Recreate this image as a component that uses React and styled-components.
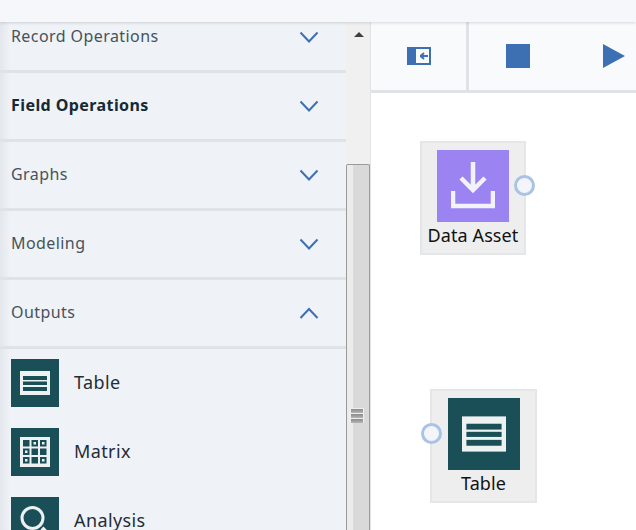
import React from "react";
import styled, { createGlobalStyle } from "styled-components";

const Global = createGlobalStyle`
  html, body { margin: 0; padding: 0; background: #fff; overflow: hidden; }
  body { font-family: "Noto Sans", "Liberation Sans", sans-serif; }
`;

const Chevron = ({ up }) => (
  <ChevronIcon width="20" height="12" viewBox="0 0 20 12">
    <path d={up ? "M1.5 11 L10 2 L18.5 11" : "M1.5 1.5 L10 10.5 L18.5 1.5"} fill="none" stroke="#3f6fb3" strokeWidth="2" />
  </ChevronIcon>
);

const TableGlyph = ({ w, h }) => (
  <svg width={w} height={h} viewBox="0 0 30 24">
    <rect width="30" height="24" fill="#eef1f1" />
    <rect x="3" y="5" width="24" height="4" fill="#1a4f58" />
    <rect x="3" y="10.5" width="24" height="3.5" fill="#1a4f58" />
    <rect x="3" y="16" width="24" height="4" fill="#1a4f58" />
  </svg>
);

const MatrixGlyph = () => {
  const hollow = [false, true, true, true, false, false, true, false, true];
  return (
    <svg width="30" height="30" viewBox="0 0 30 30">
      <rect width="30" height="30" fill="#eef1f1" />
      {hollow.map((h, c) => {
        const x = 3 + (c % 3) * 8.5;
        const y = 3 + Math.floor(c / 3) * 8.5;
        return (
          <g key={c}>
            <rect x={x} y={y} width="6.5" height="6.5" fill="#1a4f58" />
            {h && <rect x={x + 2} y={y + 2} width="2.5" height="2.5" fill="#eef1f1" />}
          </g>
        );
      })}
    </svg>
  );
};

const SearchGlyph = () => (
  <svg width="34" height="34" viewBox="0 0 34 34">
    <circle cx="14.5" cy="14" r="10.5" fill="none" stroke="#eef1f1" strokeWidth="3" />
    <path d="M24 24 L33 33" stroke="#eef1f1" strokeWidth="4" />
  </svg>
);

const sections = [
  { name: "Record Operations" },
  { name: "Field Operations", bold: true },
  { name: "Graphs" },
  { name: "Modeling" },
  { name: "Outputs", open: true },
];

const outputs = [
  { name: "Table", glyph: <TableGlyph w={30} h={24} /> },
  { name: "Matrix", glyph: <MatrixGlyph /> },
  { name: "Analysis", glyph: <SearchGlyph /> },
];

export default function App() {
  return (
    <>
      <Global />
      <Page>
        <TopBar />
        <Main>
          <Sidebar>
            <SidebarScroll>
              {sections.map((s) => (
                <Section key={s.name}>
                  <SectionTitle $bold={s.bold}>{s.name}</SectionTitle>
                  <Chevron up={s.open} />
                </Section>
              ))}
              <Items>
                {outputs.map((o) => (
                  <Item key={o.name}>
                    <ItemIcon>{o.glyph}</ItemIcon>
                    <ItemLabel>{o.name}</ItemLabel>
                  </Item>
                ))}
              </Items>
            </SidebarScroll>
          </Sidebar>
          <Scrollbar>
            <ArrowUp />
            <Thumb>
              <Grip>
                <GripBar />
                <GripBar />
                <GripBar />
              </Grip>
            </Thumb>
          </Scrollbar>
          <Workspace>
            <Toolbar>
              <ToolGroup $width={98} $pad={36}>
                <svg width="24" height="18" viewBox="0 0 24 18">
                  <rect width="24" height="18" fill="#3d70b2" />
                  <rect x="9" y="2" width="13" height="14" fill="#f9fafb" />
                  <path d="M13 9 H21 M13.5 9 L17 6 M13.5 9 L17 12" stroke="#3d70b2" strokeWidth="2" fill="none" />
                </svg>
              </ToolGroup>
              <ToolGroup $grow $pad={37}>
                <StopIcon />
                <PlayIcon width="22" height="24" viewBox="0 0 22 24">
                  <path d="M0 0 L22 12 L0 24 Z" fill="#3d70b2" />
                </PlayIcon>
              </ToolGroup>
            </Toolbar>
            <Canvas>
              <Node $x={49} $y={48} $width={106}>
                <NodeIcon $bg="#9b84f2">
                  <svg width="44" height="48" viewBox="0 0 44 48">
                    <path d="M22 0 V28 M10 16 L22 28 L34 16" stroke="#f2f3fa" strokeWidth="4.5" fill="none" />
                    <path d="M2 29 V44 H42 V29" stroke="#f2f3fa" strokeWidth="4.5" fill="none" />
                  </svg>
                </NodeIcon>
                <NodeLabel>Data Asset</NodeLabel>
                <Port $side="right" />
              </Node>
              <Node $x={59} $y={296} $width={107}>
                <NodeIcon $bg="#1a4f58">
                  <TableGlyph w={44} h={36} />
                </NodeIcon>
                <NodeLabel>Table</NodeLabel>
                <Port $side="left" />
              </Node>
            </Canvas>
          </Workspace>
        </Main>
      </Page>
    </>
  );
}

const Page = styled.div`
  width: 636px;
  height: 530px;
  display: flex;
  flex-direction: column;
  overflow: hidden;
  position: relative;
`;
const TopBar = styled.div`
  height: 22px;
  flex: none;
  background: #f5f7fb;
  box-shadow: 0 1px 3px rgba(0, 0, 0, 0.14);
  position: relative;
  z-index: 2;
`;
const Main = styled.div`
  flex: 1;
  display: flex;
  min-height: 0;
`;
const Sidebar = styled.div`
  width: 346px;
  flex: none;
  background: linear-gradient(to right, #e3e6ea 0, #eff2f6 10px);
  overflow: hidden;
`;
const SidebarScroll = styled.div`
  margin-top: -18px;
`;
const Section = styled.div`
  height: 66px;
  border-bottom: 3px solid #dfe3e6;
  display: flex;
  align-items: center;
  justify-content: space-between;
  padding: 0 27px 0 11px;
`;
const SectionTitle = styled.span`
  font-size: 16px;
  font-weight: ${(p) => (p.$bold ? 700 : 400)};
  color: ${(p) => (p.$bold ? "#152934" : "#46525c")};
  letter-spacing: 0.42px;
  position: relative;
  top: -1px;
`;
const ChevronIcon = styled.svg`
  flex: none;
`;
const Items = styled.div`
  display: flex;
  flex-direction: column;
  gap: 21px;
  padding: 10px 11px 0;
`;
const Item = styled.div`
  display: flex;
  align-items: center;
  gap: 15px;
`;
const ItemIcon = styled.div`
  width: 48px;
  height: 48px;
  background: #1a4f58;
  display: flex;
  align-items: center;
  justify-content: center;
  flex: none;
`;
const ItemLabel = styled.span`
  font-size: 18px;
  color: #1f2d38;
  letter-spacing: 0.4px;
  position: relative;
  top: -1px;
`;
const Scrollbar = styled.div`
  width: 25px;
  flex: none;
  background: #f0f0f0;
  border-right: 1px solid #e3e3e3;
  box-sizing: border-box;
  display: flex;
  flex-direction: column;
  align-items: flex-start;
`;
const ArrowUp = styled.div`
  margin: 10px 0 0 8px;
  width: 0;
  height: 0;
  border-left: 5px solid transparent;
  border-right: 5px solid transparent;
  border-bottom: 5px solid #404040;
`;
const Thumb = styled.div`
  margin-top: 127px;
  width: 24px;
  flex: 1;
  box-sizing: border-box;
  border: 1px solid #9a9a9a;
  border-bottom: none;
  border-radius: 2px 2px 0 0;
  background: linear-gradient(to right, #ececec 0, #ececec 25%, #d9d9d9 30%, #d9d9d9 100%);
  display: flex;
  justify-content: center;
  padding: 243px 0 0 0;
`;
const Grip = styled.div`
  width: 14px;
  height: 15px;
  margin-left: -2px;
  display: flex;
  flex-direction: column;
  gap: 1px;
  background: #efefef;
  padding: 1px;
  box-sizing: border-box;
`;
const GripBar = styled.div`
  height: 4px;
  background: linear-gradient(to bottom, #8a8a8a 0, #b5b5b5 100%);
  flex: none;
`;
const Workspace = styled.div`
  flex: 1;
  display: flex;
  flex-direction: column;
  min-width: 0;
`;
const Toolbar = styled.div`
  height: 71px;
  flex: none;
  display: flex;
  background: #f9fafb;
  border-bottom: 3px solid #dfe3e6;
  box-sizing: border-box;
`;
const ToolGroup = styled.div`
  width: ${(p) => (p.$grow ? "auto" : `${p.$width}px`)};
  flex: ${(p) => (p.$grow ? 1 : "none")};
  display: flex;
  align-items: center;
  padding-left: ${(p) => p.$pad}px;
  box-sizing: border-box;
  border-right: ${(p) => (p.$grow ? "none" : "3px solid #dfe3e6")};
`;
const StopIcon = styled.div`
  width: 24px;
  height: 24px;
  background: #3d70b2;
`;
const PlayIcon = styled.svg`
  margin-left: 73px;
`;
const Canvas = styled.div`
  flex: 1;
  position: relative;
  background: #fff;
`;
const Node = styled.div`
  position: absolute;
  left: ${(p) => p.$x}px;
  top: ${(p) => p.$y}px;
  width: ${(p) => p.$width}px;
  height: 114px;
  box-sizing: border-box;
  background: #eeeeee;
  border: 2px solid #e3e7ea;
  display: flex;
  flex-direction: column;
  align-items: center;
  padding-top: 7px;
`;
const NodeIcon = styled.div`
  width: 72px;
  height: 72px;
  background: ${(p) => p.$bg};
  display: flex;
  align-items: center;
  justify-content: center;
`;
const NodeLabel = styled.div`
  font-size: 18px;
  line-height: 26px;
  color: #111;
  letter-spacing: 0.1px;
  white-space: nowrap;
`;
const Port = styled.div`
  position: absolute;
  top: 32px;
  width: 21px;
  height: 21px;
  box-sizing: border-box;
  border-radius: 50%;
  background: #f3f5fb;
  border: 3px solid #a9c3e6;
  ${(p) => (p.$side === "right" ? "right: -11px;" : "left: -11px;")}
`;
